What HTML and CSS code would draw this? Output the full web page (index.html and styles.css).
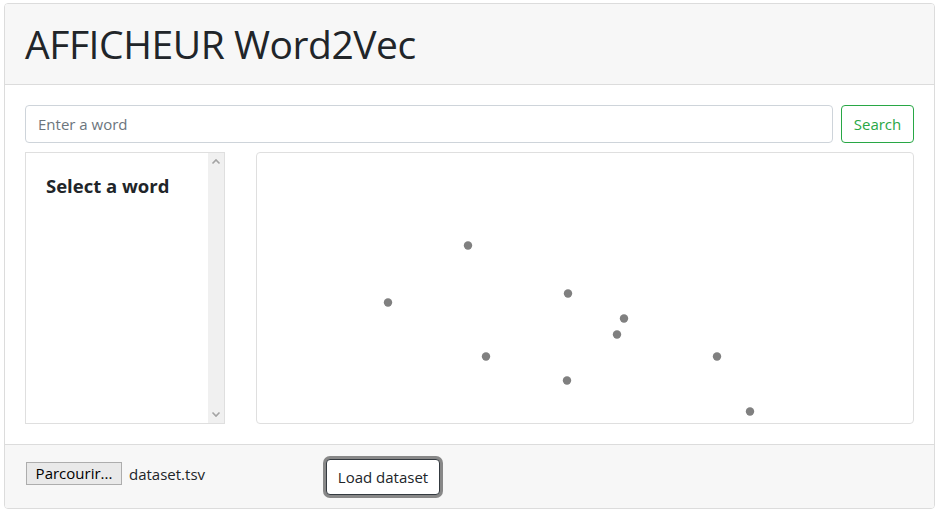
FILE: index.html
```html
<!DOCTYPE html>
<html lang="fr">
<head>
<meta charset="utf-8">
<title>AFFICHEUR Word2Vec</title>
<link rel="stylesheet" href="styles.css">
</head>
<body>
<div class="card">
  <div class="card-header">
    <h1 class="title">AFFICHEUR Word2Vec</h1>
  </div>
  <div class="card-body">
    <div class="search-row">
      <input class="word-input" type="text" placeholder="Enter a word">
      <button class="btn-search">Search</button>
    </div>
    <div class="panels">
      <div class="word-list">
        <div class="word-list-content">
          <h5 class="list-title">Select a word</h5>
        </div>
        <div class="fake-scrollbar">
          <svg class="arrow" width="16" height="16" viewBox="0 0 16 16"><path d="M4.5 9.5 L8 6 L11.5 9.5" fill="none" stroke="#a3a3a3" stroke-width="1.6"/></svg>
          <svg class="arrow" width="16" height="16" viewBox="0 0 16 16"><path d="M4.5 6.5 L8 10 L11.5 6.5" fill="none" stroke="#a3a3a3" stroke-width="1.6"/></svg>
        </div>
      </div>
      <div class="plot">
        <svg class="plot-svg" width="100%" height="100%">
          <circle cx="132" cy="150.5" r="4.2"/>
          <circle cx="212" cy="93.5" r="4.2"/>
          <circle cx="312" cy="141.5" r="4.2"/>
          <circle cx="368" cy="166.5" r="4.2"/>
          <circle cx="361" cy="182.5" r="4.2"/>
          <circle cx="230" cy="204.5" r="4.2"/>
          <circle cx="311" cy="228.5" r="4.2"/>
          <circle cx="461" cy="204.5" r="4.2"/>
          <circle cx="494" cy="259.5" r="4.2"/>
        </svg>
      </div>
    </div>
  </div>
  <div class="card-footer">
    <div class="file-group">
      <span class="file-btn">Parcourir...</span>
      <span class="file-name">dataset.tsv</span>
    </div>
    <button class="btn-load">Load dataset</button>
  </div>
</div>
</body>
</html>
```

FILE: styles.css
```css
* { box-sizing: border-box; }
html, body { margin: 0; }
body {
  padding: 3px 6px 0 4px;
  background: #fff;
  font-family: "Open Sans", "Noto Sans", Arial, sans-serif;
  color: #212529;
  font-size: 16px;
}
.card {
  border: 1px solid #dcdcdc;
  border-radius: 4px;
  background: #fff;
  overflow: hidden;
}
.card-header {
  background: #f7f7f7;
  border-bottom: 1px solid #dcdcdc;
  padding: 16px 20px;
  height: 81px;
}
.title {
  margin: 0;
  font-weight: 400;
  font-size: 39px;
  line-height: 48px;
  letter-spacing: -0.45px;
  color: #212529;
}
.card-body {
  padding: 20px;
}
.search-row {
  display: flex;
  gap: 8px;
  height: 38px;
}
.word-input {
  flex: 1;
  height: 38px;
  border: 1px solid #ced4da;
  border-radius: 4px;
  padding: 0 12px;
  font-family: inherit;
  font-size: 15px;
  color: #495057;
  outline: none;
}
.word-input::placeholder { color: #6c757d; }
.btn-search {
  width: 73px;
  height: 38px;
  background: #fff;
  border: 1px solid #28a745;
  border-radius: 4px;
  color: #28a745;
  font-family: inherit;
  font-size: 15px;
  padding: 0;
}
.panels {
  display: flex;
  gap: 31px;
  margin-top: 9px;
  height: 272px;
}
.word-list {
  width: 200px;
  display: flex;
  border: 1px solid #dfdfdf;
}
.word-list-content {
  flex: 1;
  padding: 21px 20px 20px;
}
.list-title {
  margin: 0;
  font-size: 18.5px;
  line-height: 24px;
  font-weight: 700;
  color: #212529;
}
.fake-scrollbar {
  width: 16px;
  background: #f0f0f0;
  display: flex;
  flex-direction: column;
  justify-content: space-between;
  align-items: center;
  padding: 1px 0;
}
.arrow { display: block; }
.plot {
  flex: 1;
  border: 1px solid #dfdfdf;
  border-radius: 4px;
  position: relative;
}
.plot-svg {
  position: absolute;
  left: -1px;
  top: -1px;
}
.plot-svg circle { fill: #808080; }
.card-footer {
  background: #f7f7f7;
  border-top: 1px solid #dcdcdc;
  height: 64px;
  padding: 0 20px 0 21px;
  display: flex;
  align-items: center;
}
.file-group {
  width: 300px;
  display: flex;
  align-items: center;
  gap: 7px;
  margin-top: -6px;
}
.file-btn {
  display: inline-block;
  background: #e9e9e9;
  border: 1px solid #adadad;
  height: 23px;
  width: 96px;
  line-height: 21px;
  text-align: center;
  font-size: 15px;
  color: #000;
}
.file-name {
  font-size: 15px;
  color: #212529;
}
.btn-load {
  width: 114px;
  height: 36px;
  background: #fff;
  border: 1px solid #343a40;
  border-radius: 4px;
  box-shadow: 0 0 0 3px #888;
  font-family: inherit;
  font-size: 15px;
  color: #212529;
  padding: 0;
}
```
